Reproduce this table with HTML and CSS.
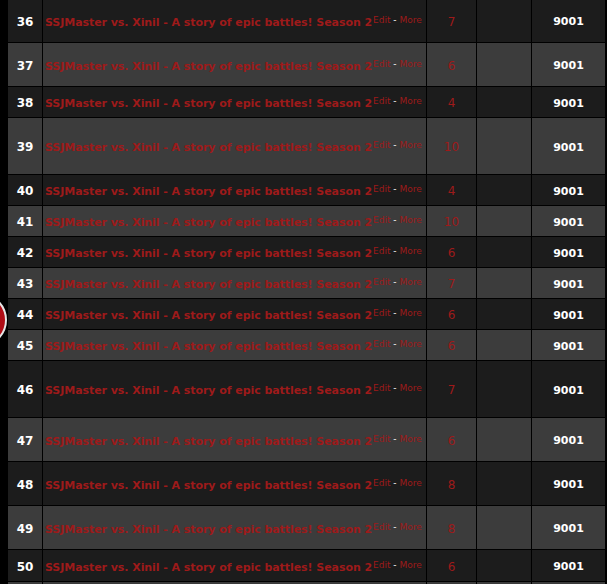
FILE: index.html
```html
<!DOCTYPE html>
<html>
<head>
<meta charset="utf-8">
<link rel="stylesheet" href="styles.css">
</head>
<body>
<div class="deco"></div>
<table class="list">
<colgroup><col class="c1"><col class="c2"><col class="c3"><col class="c4"><col class="c5"></colgroup>
<tbody>
<tr class="dark h43"><td class="num">36</td><td class="title"><a class="t">SSJMaster vs. Xinil - A story of epic battles! Season 2</a><span class="links"><a>Edit</a> <span class="dash">-</span> <a>More</a></span></td><td class="cnt">7</td><td class="empty"></td><td class="score">9001</td></tr>
<tr class="light h43"><td class="num">37</td><td class="title"><a class="t">SSJMaster vs. Xinil - A story of epic battles! Season 2</a><span class="links"><a>Edit</a> <span class="dash">-</span> <a>More</a></span></td><td class="cnt">6</td><td class="empty"></td><td class="score">9001</td></tr>
<tr class="dark h30"><td class="num">38</td><td class="title"><a class="t">SSJMaster vs. Xinil - A story of epic battles! Season 2</a><span class="links"><a>Edit</a> <span class="dash">-</span> <a>More</a></span></td><td class="cnt">4</td><td class="empty"></td><td class="score">9001</td></tr>
<tr class="light h56"><td class="num">39</td><td class="title"><a class="t">SSJMaster vs. Xinil - A story of epic battles! Season 2</a><span class="links"><a>Edit</a> <span class="dash">-</span> <a>More</a></span></td><td class="cnt">10</td><td class="empty"></td><td class="score">9001</td></tr>
<tr class="dark h30"><td class="num">40</td><td class="title"><a class="t">SSJMaster vs. Xinil - A story of epic battles! Season 2</a><span class="links"><a>Edit</a> <span class="dash">-</span> <a>More</a></span></td><td class="cnt">4</td><td class="empty"></td><td class="score">9001</td></tr>
<tr class="light h30"><td class="num">41</td><td class="title"><a class="t">SSJMaster vs. Xinil - A story of epic battles! Season 2</a><span class="links"><a>Edit</a> <span class="dash">-</span> <a>More</a></span></td><td class="cnt">10</td><td class="empty"></td><td class="score">9001</td></tr>
<tr class="dark h30"><td class="num">42</td><td class="title"><a class="t">SSJMaster vs. Xinil - A story of epic battles! Season 2</a><span class="links"><a>Edit</a> <span class="dash">-</span> <a>More</a></span></td><td class="cnt">6</td><td class="empty"></td><td class="score">9001</td></tr>
<tr class="light h30"><td class="num">43</td><td class="title"><a class="t">SSJMaster vs. Xinil - A story of epic battles! Season 2</a><span class="links"><a>Edit</a> <span class="dash">-</span> <a>More</a></span></td><td class="cnt">7</td><td class="empty"></td><td class="score">9001</td></tr>
<tr class="dark h30"><td class="num">44</td><td class="title"><a class="t">SSJMaster vs. Xinil - A story of epic battles! Season 2</a><span class="links"><a>Edit</a> <span class="dash">-</span> <a>More</a></span></td><td class="cnt">6</td><td class="empty"></td><td class="score">9001</td></tr>
<tr class="light h30"><td class="num">45</td><td class="title"><a class="t">SSJMaster vs. Xinil - A story of epic battles! Season 2</a><span class="links"><a>Edit</a> <span class="dash">-</span> <a>More</a></span></td><td class="cnt">6</td><td class="empty"></td><td class="score">9001</td></tr>
<tr class="dark h56"><td class="num">46</td><td class="title"><a class="t">SSJMaster vs. Xinil - A story of epic battles! Season 2</a><span class="links"><a>Edit</a> <span class="dash">-</span> <a>More</a></span></td><td class="cnt">7</td><td class="empty"></td><td class="score">9001</td></tr>
<tr class="light h43"><td class="num">47</td><td class="title"><a class="t">SSJMaster vs. Xinil - A story of epic battles! Season 2</a><span class="links"><a>Edit</a> <span class="dash">-</span> <a>More</a></span></td><td class="cnt">6</td><td class="empty"></td><td class="score">9001</td></tr>
<tr class="dark h43"><td class="num">48</td><td class="title"><a class="t">SSJMaster vs. Xinil - A story of epic battles! Season 2</a><span class="links"><a>Edit</a> <span class="dash">-</span> <a>More</a></span></td><td class="cnt">8</td><td class="empty"></td><td class="score">9001</td></tr>
<tr class="light h43"><td class="num">49</td><td class="title"><a class="t">SSJMaster vs. Xinil - A story of epic battles! Season 2</a><span class="links"><a>Edit</a> <span class="dash">-</span> <a>More</a></span></td><td class="cnt">8</td><td class="empty"></td><td class="score">9001</td></tr>
<tr class="dark h31"><td class="num">50</td><td class="title"><a class="t">SSJMaster vs. Xinil - A story of epic battles! Season 2</a><span class="links"><a>Edit</a> <span class="dash">-</span> <a>More</a></span></td><td class="cnt">6</td><td class="empty"></td><td class="score">9001</td></tr>
<tr class="light h30"><td></td><td></td><td></td><td></td><td></td></tr>
</tbody>
</table>
</body>
</html>
```
FILE: styles.css
```css
html, body {
  margin: 0;
  padding: 0;
  background: #000;
  overflow: hidden;
  height: 584px;
}
body {
  position: relative;
  font-family: "DejaVu Sans", Verdana, sans-serif;
  font-size: 12px;
}
.deco {
  position: absolute;
  left: -47px;
  top: 293px;
  width: 50px;
  height: 50px;
  border-radius: 50%;
  background: #b00d16;
  border: 2px solid #e6e6e6;
}
.list {
  margin: -2px 0 0 7px;
  border-collapse: separate;
  border-spacing: 1px;
  background: #000;
  table-layout: fixed;
  width: 599px;
}
.c1 { width: 34px; }
.c2 { width: 383px; }
.c3 { width: 49px; }
.c4 { width: 54px; }
.c5 { width: 73px; }
.list td {
  padding: 0;
  vertical-align: middle;
  white-space: nowrap;
  overflow: hidden;
}
.dark td { background: #1c1c1c; }
.light td { background: #3c3c3c; }
.h30 { height: 30px; }
.h31 { height: 31px; }
.h43 { height: 43px; }
.h56 { height: 56px; }
.num {
  text-align: center;
  color: #fff;
  font-weight: bold;
  font-size: 12px;
  padding-top: 2px !important;
}
.list td.title {
  padding: 2px 0 0 2px;
  color: #9e1a1a;
}
.t {
  font-weight: bold;
  font-size: 11px;
  letter-spacing: -0.06px;
  color: #9e1a1a;
}
.links {
  font-size: 9px;
  vertical-align: 3px;
  margin-left: 1px;
}
.links a { color: #9e1a1a; }
.dash { color: #fff; }
.cnt {
  text-align: center;
  color: #9e1a1a;
  font-size: 12px;
  padding-top: 2px !important;
}
.score {
  text-align: center;
  color: #fff;
  font-weight: bold;
  font-size: 11px;
  padding-top: 2px !important;
}
```
